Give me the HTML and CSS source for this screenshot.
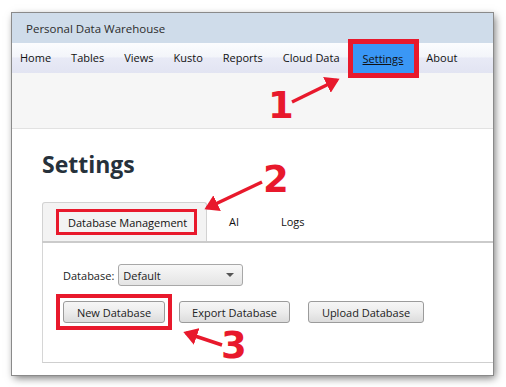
FILE: index.html
```html
<!DOCTYPE html>
<html lang="en">
<head>
    <meta charset="UTF-8">
    <meta name="viewport" content="width=device-width, initial-scale=1.0">
    <title>Personal Data Warehouse</title>
    <link rel="stylesheet" href="styles.css">
</head>
<body>
    <div class="window">
        <div class="titlebar">Personal Data Warehouse</div>

        <div class="menubar">
            <span class="menuItem">Home</span>
            <span class="menuItem">Tables</span>
            <span class="menuItem">Views</span>
            <span class="menuItem">Kusto</span>
            <span class="menuItem">Reports</span>
            <span class="menuItem">Cloud Data</span>
            <span class="menuItem active marked">Settings</span>
            <span class="menuItem">About</span>
        </div>

        <div class="toolbar"></div>

        <div class="page">
            <h1 class="pageTitle">Settings</h1>

            <div class="tabs">
                <div class="tabHeader">
                    <div class="tab selected"><span class="marked">Database Management</span></div>
                    <div class="tab ai">AI</div>
                    <div class="tab logs">Logs</div>
                </div>
                <div class="tabPanel">
                    <div class="field">
                        <label>Database:</label>
                        <div class="combo">
                            <span>Default</span>
                            <span class="comboArrow"></span>
                        </div>
                    </div>
                    <div class="buttons">
                        <span class="marked"><button class="newDb">New Database</button></span>
                        <button class="export">Export Database</button>
                        <button class="upload">Upload Database</button>
                    </div>
                </div>
            </div>
        </div>
    </div>

    <!-- callouts drawn over the screenshot -->
    <svg class="callouts" width="506" height="387" viewBox="0 0 506 387">
        <defs>
            <marker id="head" markerWidth="5" markerHeight="5" refX="3.2" refY="2.5" orient="auto" markerUnits="strokeWidth">
                <path d="M0,0 L4,2.5 L0,5 z" fill="#e8192c"/>
            </marker>
        </defs>
        <line x1="292" y1="102" x2="337" y2="80" stroke="#e8192c" stroke-width="3.5" marker-end="url(#head)"/>
        <line x1="262" y1="182" x2="207" y2="208" stroke="#e8192c" stroke-width="3.5" marker-end="url(#head)"/>
        <line x1="222" y1="345" x2="186" y2="333" stroke="#e8192c" stroke-width="3.5" marker-end="url(#head)"/>
        <text x="268" y="118" class="num">1</text>
        <text x="263" y="192" class="num">2</text>
        <text x="221" y="358" class="num">3</text>
    </svg>
</body>
</html>
```
FILE: styles.css
```css
body {
    margin: 0;
    background: #fff;
    font-family: "Open Sans", "Noto Sans", sans-serif;
    font-size: 11px;
    color: #222;
    width: 506px;
    height: 387px;
    overflow: hidden;
}

.window {
    margin: 13px 0 0 12px;
    width: 481px;
    height: 362px;
    background: #fff;
    box-shadow: 0 0 0 1px #8a8a8a, 2px 3px 8px rgba(0, 0, 0, 0.55);
    overflow: hidden;
}

.titlebar {
    height: 30px;
    line-height: 31px;
    padding-left: 14px;
    background: #cfdcea;
    font-size: 11.5px;
    color: #2c2c2c;
    white-space: nowrap;
}

.menubar {
    display: flex;
    height: 30px;
    padding-left: 0;
    align-items: stretch;
    background: linear-gradient(#fbfcfe 0%, #f3f5fa 46%, #e8eaf6 50%, #e2e4f2 100%);
}

.menuItem {
    display: flex;
    align-items: center;
    padding: 0 10px 1px;
    font-size: 11px;
    color: #111;
    white-space: nowrap;
}

.menuItem:first-child {
    padding-left: 8px;
}

.menuItem.active {
    background: #3a97f5;
    text-decoration: underline;
    margin: 1px 2px 0 3px;
    padding: 0 11px 1px 10px;
}

.menuItem.marked {
    outline: 5px solid #e8192c;
}

.toolbar {
    height: 55px;
    background: #f6f6f6;
    border-bottom: 1px solid #e2e2e2;
}

.page {
    padding: 20px 0 0 30px;
}

.pageTitle {
    margin: 0;
    font-family: "Open Sans", "Noto Sans", sans-serif;
    font-size: 23px;
    font-weight: 700;
    color: #26313b;
    line-height: 30px;
}

.tabs {
    margin-top: 23px;
}

.tabHeader {
    display: flex;
    height: 39px;
    border-bottom: 2px solid #cbcbcb;
}

.tab {
    display: flex;
    align-items: center;
    box-sizing: border-box;
    font-size: 11px;
    color: #111;
    white-space: nowrap;
}

.tab.selected {
    padding: 0 0 0 13px;
    width: 165px;
    background: #f3f3f3;
    border: 1px solid #d2d2d2;
    border-bottom: none;
    border-radius: 3px 3px 0 0;
}

.tab.selected .marked {
    display: flex;
    align-items: center;
    width: 141px;
    height: 26px;
    box-sizing: border-box;
    padding-left: 9px;
    border: 3px solid #e8192c;
}

.tab.ai {
    padding-left: 22px;
    width: 52px;
}

.tab.logs {
    padding-left: 22px;
}

.tabPanel {
    height: 120px;
    border-left: 1px solid #d6d6d6;
    border-bottom: 1px solid #cfcfcf;
    padding: 21px 0 0 20px;
    box-sizing: border-box;
}

.field {
    display: flex;
    align-items: center;
    gap: 4px;
}

.field label {
    font-size: 11px;
    color: #222;
}

.combo {
    display: flex;
    align-items: center;
    justify-content: space-between;
    width: 125px;
    height: 22px;
    box-sizing: border-box;
    padding: 0 8px 0 4px;
    border: 1px solid #a8a8a8;
    border-radius: 3px;
    background: linear-gradient(#f8f8f8, #e4e4e4);
    font-size: 11px;
}

.comboArrow {
    width: 0;
    height: 0;
    border-left: 4px solid transparent;
    border-right: 4px solid transparent;
    border-top: 4px solid #555;
}

.buttons {
    display: flex;
    align-items: center;
    margin-top: 15px;
}

.buttons button {
    height: 22px;
    padding: 0;
    border: 1px solid #9b9b9b;
    border-radius: 3px;
    background: linear-gradient(#f6f6f6 0%, #ececec 50%, #dcdcdc 100%);
    font-family: "Open Sans", "Noto Sans", sans-serif;
    font-size: 11px;
    color: #222;
    white-space: nowrap;
}

.buttons .marked {
    display: flex;
    outline: 4px solid #e8192c;
    outline-offset: 3px;
}

.buttons .newDb {
    width: 102px;
}

.buttons .export {
    width: 111px;
    margin-left: 14px;
}

.buttons .upload {
    width: 116px;
    margin-left: 18px;
}

.callouts {
    position: absolute;
    left: 0;
    top: 0;
}

.num {
    font-family: "DejaVu Sans", sans-serif;
    font-weight: 700;
    font-size: 37px;
    fill: #e8192c;
}
```
